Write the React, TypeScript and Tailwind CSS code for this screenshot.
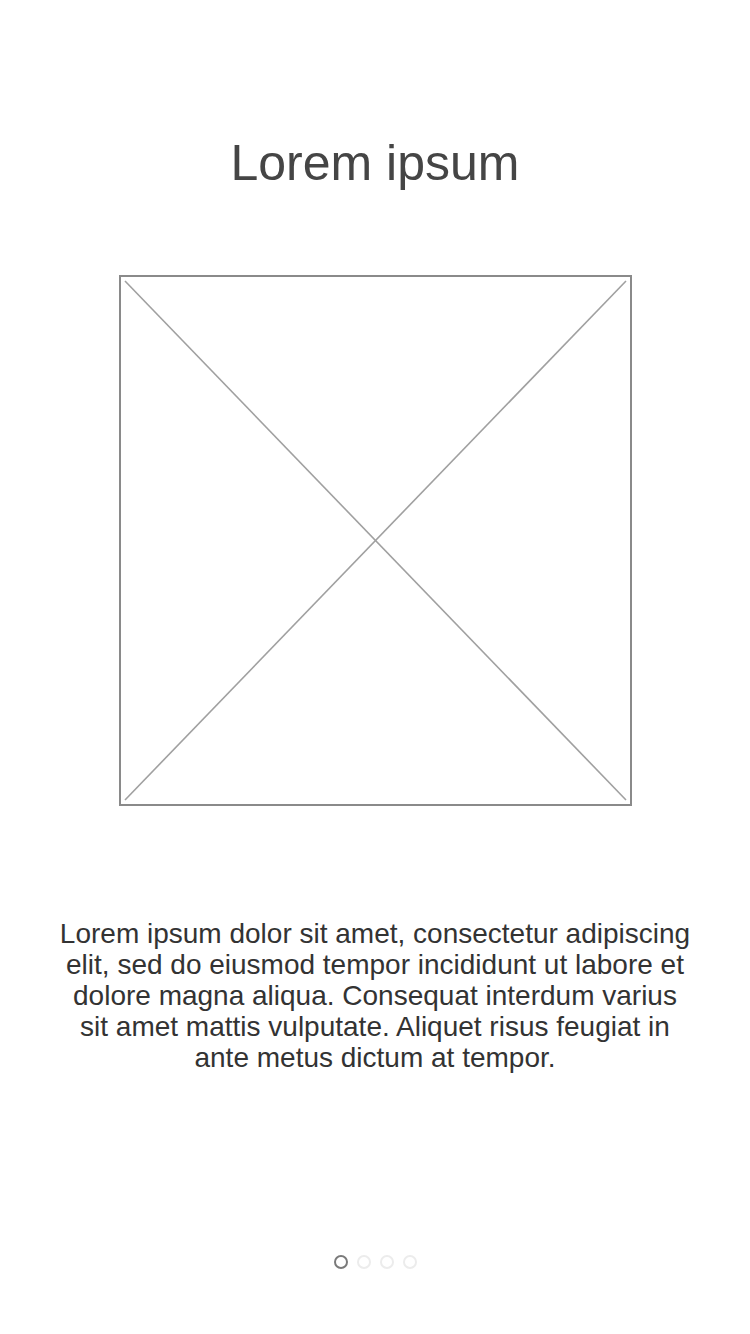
import React from 'react';

const body =
  'Lorem ipsum dolor sit amet, consectetur adipiscing elit, sed do eiusmod tempor incididunt ut labore et dolore magna aliqua. Consequat interdum varius sit amet mattis vulputate. Aliquet risus feugiat in ante metus dictum at tempor.';

function Placeholder() {
  return (
    <div className="relative w-[513px] h-[531px] border-2 border-[#8a8a8a]">
      <svg className="absolute inset-0 w-full h-full" viewBox="0 0 509 527" preserveAspectRatio="none">
        <line x1="4" y1="4" x2="505" y2="523" stroke="#a0a0a0" strokeWidth="1.6" />
        <line x1="505" y1="4" x2="4" y2="523" stroke="#a0a0a0" strokeWidth="1.6" />
      </svg>
    </div>
  );
}

function Dots({ count, active }: { count: number; active: number }) {
  return (
    <div className="flex gap-[9px]">
      {Array.from({ length: count }).map((_, i) => (
        <span
          key={i}
          className={
            i === active
              ? 'w-[14px] h-[14px] rounded-full border-[2.5px] border-[#7a7a7a]'
              : 'w-[14px] h-[14px] rounded-full border-[2.5px] border-[#ececec]'
          }
        />
      ))}
    </div>
  );
}

export default function App() {
  return (
    <div
      className="w-[750px] h-[1334px] bg-white flex flex-col items-center"
      style={{ fontFamily: '"Liberation Sans", Arial, sans-serif' }}
    >
      <h1 className="mt-[134px] text-[50px] leading-[58px] text-[#454545]">Lorem ipsum</h1>
      <div className="mt-[83px]">
        <Placeholder />
      </div>
      <p className="mt-[112px] w-[634px] text-center text-[28px] leading-[31px] text-[#333333]">{body}</p>
      <div className="mt-auto mb-[65px]">
        <Dots count={4} active={0} />
      </div>
    </div>
  );
}
